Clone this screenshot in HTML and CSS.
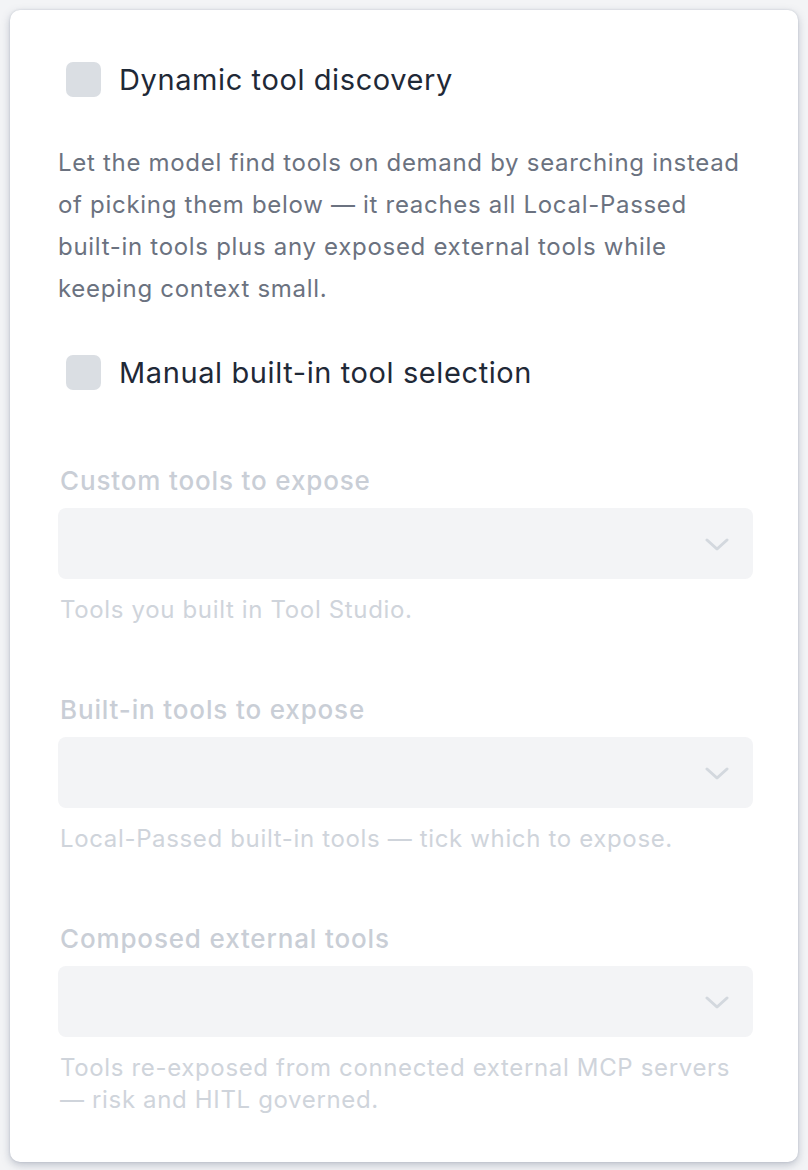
FILE: index.html
```html
<!DOCTYPE html>
<html lang="en">
<head>
<meta charset="utf-8">
<title>Tool settings</title>
<link rel="stylesheet" href="styles.css">
</head>
<body>
<div class="card">
  <label class="check-row first">
    <span class="box"></span>
    <span class="check-label">Dynamic tool discovery</span>
  </label>
  <p class="desc">Let the model find tools on demand by searching instead of picking them below — it reaches all Local-Passed built-in tools plus any exposed external tools while keeping context small.</p>
  <label class="check-row second">
    <span class="box"></span>
    <span class="check-label">Manual built-in tool selection</span>
  </label>

  <div class="fields">
    <div class="field">
      <div class="field-label">Custom tools to expose</div>
      <div class="select">
        <svg class="chev" width="24" height="14" viewBox="0 0 24 14"><path d="M2 2 L12 11 L22 2" fill="none" stroke="#d3d8de" stroke-width="3" stroke-linecap="round" stroke-linejoin="round"/></svg>
      </div>
      <div class="hint">Tools you built in Tool Studio.</div>
    </div>
    <div class="field">
      <div class="field-label">Built-in tools to expose</div>
      <div class="select">
        <svg class="chev" width="24" height="14" viewBox="0 0 24 14"><path d="M2 2 L12 11 L22 2" fill="none" stroke="#d3d8de" stroke-width="3" stroke-linecap="round" stroke-linejoin="round"/></svg>
      </div>
      <div class="hint">Local-Passed built-in tools — tick which to expose.</div>
    </div>
    <div class="field">
      <div class="field-label">Composed external tools</div>
      <div class="select">
        <svg class="chev" width="24" height="14" viewBox="0 0 24 14"><path d="M2 2 L12 11 L22 2" fill="none" stroke="#d3d8de" stroke-width="3" stroke-linecap="round" stroke-linejoin="round"/></svg>
      </div>
      <div class="hint">Tools re-exposed from connected external MCP servers — risk and HITL governed.</div>
    </div>
  </div>
</div>
</body>
</html>
```
FILE: styles.css
```css
html, body {
  margin: 0;
  padding: 0;
}
body {
  background: #f3f4f6;
  font-family: Inter, "Noto Sans", sans-serif;
  padding: 10px;
  height: 1170px;
  box-sizing: border-box;
}
.card {
  width: 788px;
  height: 1152px;
  box-sizing: border-box;
  background: #ffffff;
  border-radius: 10px;
  box-shadow: 0 3px 8px rgba(100, 110, 135, 0.38), 0 0 2px rgba(100, 110, 135, 0.25);
  padding: 52px 45px 0 48px;
}
.check-row {
  display: flex;
  align-items: center;
  gap: 18px;
  padding-left: 8px;
}
.box {
  width: 35px;
  height: 35px;
  border-radius: 7px;
  background: #dadee3;
  flex: none;
}
.check-label {
  font-size: 29px;
  letter-spacing: 0.6px;
  color: #1f2937;
  line-height: 35px;
}
.desc {
  margin: 45px 0 0 0;
  font-size: 24px;
  letter-spacing: 0.7px;
  line-height: 42px;
  color: #6b7280;
}
.second {
  margin-top: 45px;
}
.fields {
  margin-top: 75px;
  display: flex;
  flex-direction: column;
  gap: 68px;
}
.field-label {
  font-size: 26px;
  letter-spacing: 0.85px;
  line-height: 32px;
  color: #c9ced6;
  padding-left: 2px;
  font-weight: 500;
}
.select {
  margin-top: 11px;
  height: 71px;
  background: #f3f4f6;
  border-radius: 8px;
  display: flex;
  align-items: center;
  justify-content: flex-end;
  padding-right: 24px;
}
.chev {
  display: block;
  margin-top: 2px;
}
.hint {
  margin-top: 15px;
  font-size: 24px;
  letter-spacing: 0.65px;
  line-height: 32px;
  color: #cfd4db;
  padding-left: 2px;
}
```
